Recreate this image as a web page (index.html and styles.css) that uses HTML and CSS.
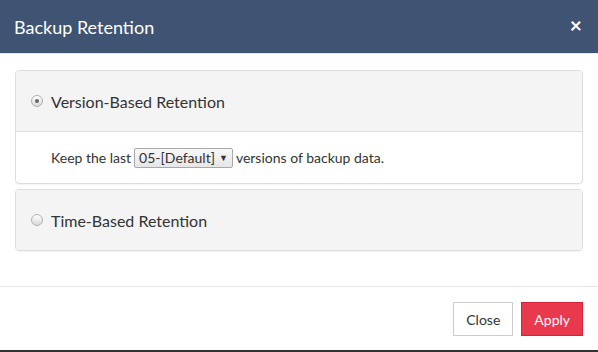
FILE: index.html
```html
<!DOCTYPE html>
<html lang="en">
<head>
    <meta charset="UTF-8">
    <title>Backup Retention</title>
    <link rel="stylesheet" href="styles.css">
</head>
<body>
    <div class="modal">
        <div class="modal-header">
            <h4 class="modal-title">Backup Retention</h4>
            <button class="close">&times;</button>
        </div>
        <div class="modal-body">
            <div class="panel-group">
                <div class="panel">
                    <div class="panel-heading">
                        <span class="radio checked"></span>
                        <span class="panel-title">Version-Based Retention</span>
                    </div>
                    <div class="panel-body">
                        Keep the last
                        <span class="select">05-[Default] <span class="caret">&#9660;</span></span>
                        versions of backup data.
                    </div>
                </div>
                <div class="panel">
                    <div class="panel-heading">
                        <span class="radio"></span>
                        <span class="panel-title">Time-Based Retention</span>
                    </div>
                </div>
            </div>
        </div>
        <div class="modal-footer">
            <button class="btn btn-default">Close</button>
            <button class="btn btn-danger">Apply</button>
        </div>
    </div>
</body>
</html>
```

FILE: styles.css
```css
html {
    background: #333;
}
body {
    margin: 0;
    font-family: Lato, 'Open Sans', sans-serif;
    font-size: 14px;
    color: #333;
}
.modal {
    background: #fff;
    width: 598px;
    height: 350px;
    display: flex;
    flex-direction: column;
}
.modal-header {
    background: #3f5473;
    color: #fff;
    height: 53px;
    border-bottom: 1px solid #e5e5e5;
    display: flex;
    align-items: center;
    justify-content: space-between;
    padding: 0 16px 0 14px;
    flex-shrink: 0;
}
.modal-title {
    margin: 0;
    font-size: 18px;
    font-weight: normal;
    padding-top: 1px;
}
.close {
    background: none;
    border: none;
    color: #fff;
    font-family: Lato, sans-serif;
    font-size: 21px;
    font-weight: bold;
    padding: 0;
    line-height: 1;
    margin-top: -4px;
}
.modal-body {
    padding: 16px 15px 15px;
}
.panel-group {
    margin-bottom: 20px;
}
.panel {
    border: 1px solid #ddd;
    border-radius: 4px;
    box-shadow: 0 1px 1px rgba(0, 0, 0, 0.05);
    overflow: hidden;
}
.panel + .panel {
    margin-top: 5px;
}
.panel-heading {
    background: #f4f4f4;
    height: 60px;
    display: flex;
    align-items: center;
    padding-left: 15px;
}
.panel-body {
    border-top: 1px solid #ddd;
    height: 51px;
    display: flex;
    align-items: center;
    padding-left: 35px;
    gap: 3px;
}
.panel-title {
    font-size: 16px;
}
.radio {
    width: 10px;
    height: 10px;
    border: 1px solid #b0b0b0;
    border-radius: 50%;
    background: linear-gradient(#fff, #d8d8d8);
    margin-right: 8px;
    display: inline-flex;
    align-items: center;
    justify-content: center;
}
.radio.checked::after {
    content: "";
    width: 4px;
    height: 4px;
    border-radius: 50%;
    background: #666;
}
.select {
    border: 1px solid #a9a9a9;
    border-radius: 2px;
    background: linear-gradient(#f8f8f8, #e6e6e6);
    padding: 0 4px;
    height: 18px;
    display: inline-flex;
    align-items: center;
    gap: 4px;
}
.caret {
    font-size: 9px;
}
.modal-footer {
    border-top: 1px solid #e5e5e5;
    padding: 15px;
    display: flex;
    justify-content: flex-end;
    gap: 8px;
    margin-top: auto;
}
.btn {
    font-family: Lato, sans-serif;
    font-size: 14px;
    height: 34px;
    padding: 0 12px;
    border-radius: 0;
}
.btn-default {
    background: #fff;
    border: 1px solid #ccc;
    color: #333;
}
.btn-danger {
    background: #e8394d;
    border: 1px solid #d7233a;
    color: #fff;
}
```
